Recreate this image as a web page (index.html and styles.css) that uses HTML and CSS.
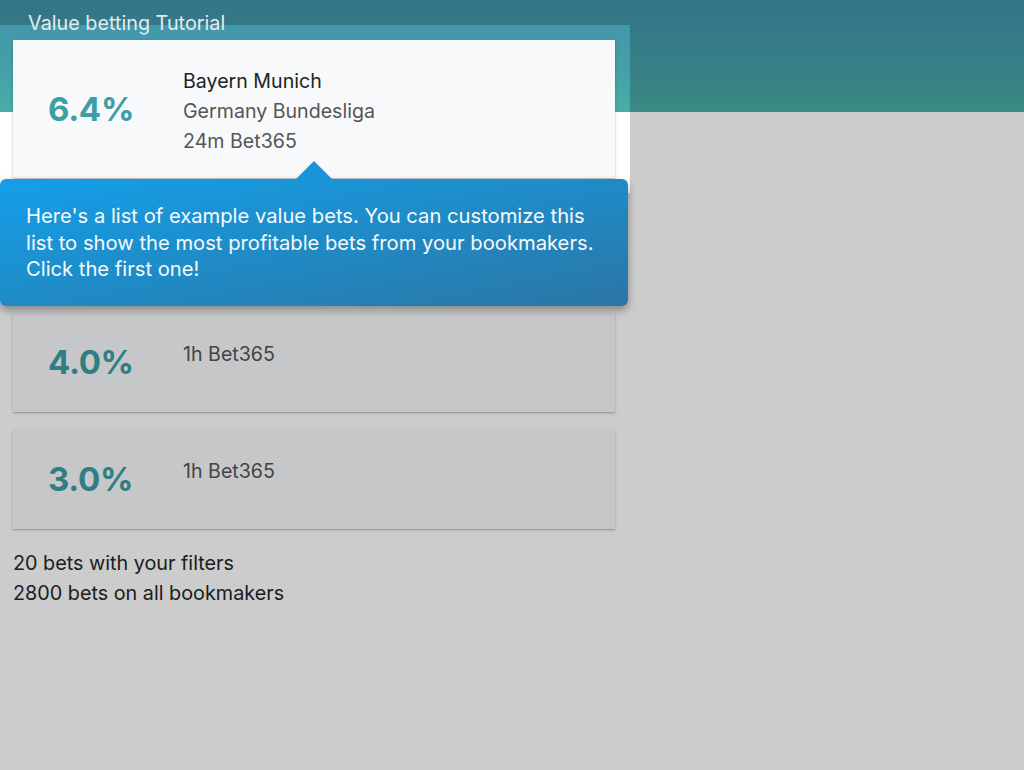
FILE: index.html
```html
<!DOCTYPE html>
<html lang="en">
<head>
<meta charset="utf-8">
<title>Value betting Tutorial</title>
<link rel="stylesheet" href="styles.css">
</head>
<body>
<div class="app">
  <header class="topbar">
    <h1 class="title">Value betting Tutorial</h1>
  </header>
  <main class="list">
    <div class="card card-first">
      <div class="pct">6.4%</div>
      <div class="info">
        <div class="team">Bayern Munich</div>
        <div class="meta">Germany Bundesliga</div>
        <div class="meta">24m Bet365</div>
      </div>
    </div>
    <div class="card card-covered"></div>
    <div class="card">
      <div class="pct">4.0%</div>
      <div class="info">
        <div class="meta">1h Bet365</div>
      </div>
    </div>
    <div class="card">
      <div class="pct">3.0%</div>
      <div class="info">
        <div class="meta">1h Bet365</div>
      </div>
    </div>
    <div class="summary">
      <div>20 bets with your filters</div>
      <div>2800 bets on all bookmakers</div>
    </div>
  </main>

  <div class="spotlight"></div>
  <div class="tooltip">
    <span class="arrow"></span>
    <p class="tip-text">Here's a list of example value bets. You can customize this<br>list to show the most profitable bets from your bookmakers.<br>Click the first one!</p>
  </div>
</div>
</body>
</html>
```

FILE: styles.css
```css
* { box-sizing: border-box; }

html, body {
  margin: 0;
  padding: 0;
  background: #ffffff;
  height: 100%;
  overflow: hidden;
}

body {
  font-family: "Inter", "Noto Sans", sans-serif;
  color: #222222;
}

.app {
  position: relative;
  min-height: 770px;
  background:
    linear-gradient(180deg, #4292ad 0%, #44a0a8 60%, #48aea3 100%) top left / 100% 112px no-repeat,
    #ffffff;
}

.topbar {
  padding: 8px 28px 2px;
}

.title {
  position: relative;
  z-index: 30;
  margin: 0;
  font-size: 19.8px;
  line-height: 30px;
  font-weight: 400;
  color: #e2ecef;
}

.list {
  width: 628px;
  padding: 0 13px;
}

.card {
  display: flex;
  align-items: center;
  width: 602px;
  min-height: 99px;
  padding: 24px 0;
  margin-bottom: 18px;
  background: #f8f9fa;
  box-shadow: 0 1px 3px rgba(0, 0, 0, 0.18), 0 1px 1px rgba(0, 0, 0, 0.12);
}

.pct {
  width: 170px;
  flex: none;
  padding-left: 35px;
  font-size: 33px;
  line-height: 51px;
  font-weight: 700;
  color: #3c9ea6;
  letter-spacing: -0.3px;
}

.info {
  align-self: flex-start;
  padding-top: 2px;
  margin-bottom: -2px;
  font-size: 19.6px;
  line-height: 30px;
}

.card-first .info {
  align-self: center;
}

.team {
  color: #222222;
}

.meta {
  color: #555555;
}

.summary {
  padding-top: 1px;
  font-size: 19.8px;
  line-height: 30px;
  color: #262626;
}

.spotlight {
  position: absolute;
  z-index: 10;
  left: -2px;
  top: 25px;
  width: 632px;
  height: 168px;
  box-shadow: 0 0 0 3000px rgba(0, 0, 0, 0.2);
  pointer-events: none;
}

.tooltip {
  position: absolute;
  z-index: 20;
  left: 0;
  top: 179px;
  width: 628px;
  height: 127px;
  padding: 24px 10px 24px 26px;
  border-radius: 6px;
  background: linear-gradient(to bottom right, #149fea 0%, #1f8bc6 50%, #2b76a5 100%);
  box-shadow: 0 4px 9px rgba(0, 0, 0, 0.35);
  color: #f4f9fc;
}

.arrow {
  position: absolute;
  left: 296px;
  top: -18px;
  width: 0;
  height: 0;
  border-left: 18px solid transparent;
  border-right: 18px solid transparent;
  border-bottom: 18px solid #1a93d8;
}

.tip-text {
  margin: 0;
  font-size: 20.2px;
  line-height: 26.5px;
  white-space: nowrap;
}
```
